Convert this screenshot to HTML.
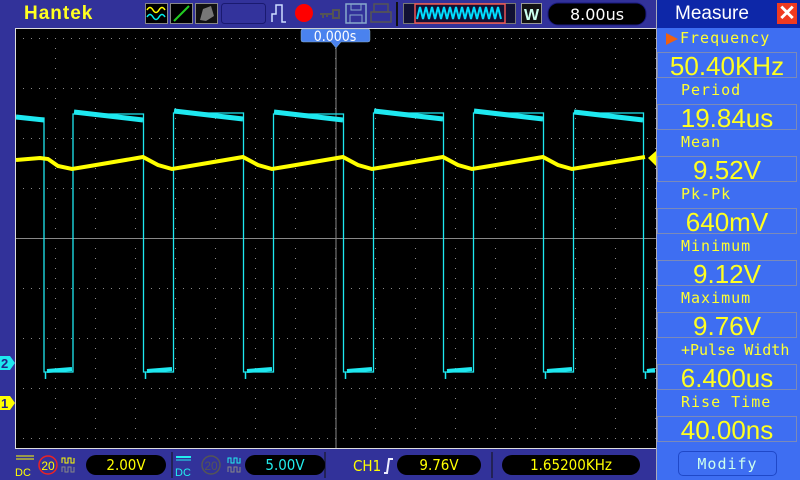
<!DOCTYPE html>
<html><head><style>
body{margin:0;width:800px;height:480px;overflow:hidden;background:#32329a;font-family:"Liberation Sans",sans-serif;position:relative}
.a{position:absolute}
.lbl{position:absolute;left:681px;color:#ffff30;font-size:15px;letter-spacing:1px;font-family:"DejaVu Sans Mono","Liberation Mono",monospace}
.val{position:absolute;left:657px;width:140px;height:26px;border:1px solid #7b8ab8;box-sizing:border-box;color:#ffff20;font-size:26px;line-height:26px;text-align:center;font-family:"Liberation Sans",sans-serif}
.pill{position:absolute;background:#000;border-radius:10px;height:20px;line-height:20px;text-align:center;font-size:15px;font-family:"DejaVu Sans Condensed","Liberation Sans",sans-serif}
</style></head><body>
<div class="a" style="left:24px;top:3px;color:#ffff20;font-weight:bold;font-size:19px;letter-spacing:1px">Hantek</div>
<svg class="a" style="left:0;top:0" width="656" height="29">
<rect x="145.5" y="3.5" width="22" height="20" fill="#000" stroke="#888"/>
<path d="M147 10 q3-5 6 0 t6 0 t6 0" stroke="#ff0" fill="none" stroke-width="1.5"/>
<path d="M147 17 q3-5 6 0 t6 0 t6 0" stroke="#0ee" fill="none" stroke-width="1.5"/>
<rect x="170.5" y="3.5" width="22" height="20" fill="#000" stroke="#888"/>
<path d="M174 21 L189 6" stroke="#2c2" stroke-width="2"/>
<rect x="195.5" y="3.5" width="22" height="20" fill="#111" stroke="#888"/>
<path d="M200 20 L203 9 L211 6 L214 16 L206 21Z" fill="#777"/>
<rect x="221.5" y="3.5" width="44" height="20" rx="3" fill="#33339c" stroke="#1a1a70"/>
<path d="M272 22 V14 H276 V5 H282 V22 H286" stroke="#cdf" fill="none" stroke-width="1.5"/>
<circle cx="304" cy="13" r="9" fill="#f00"/>
<path d="M320 14 H332 M333 10 h6 v8 h-6z M323 14 v4 M327 14 v3" stroke="#555" stroke-width="2" fill="none"/>
<rect x="346" y="4" width="20" height="19" fill="none" stroke="#8ac" stroke-width="1.5"/>
<rect x="351" y="4" width="10" height="6" fill="none" stroke="#8ac"/>
<rect x="350" y="15" width="12" height="8" fill="none" stroke="#8ac"/>
<rect x="374" y="4" width="14" height="8" fill="none" stroke="#555" stroke-width="1.5"/>
<rect x="371" y="12" width="20" height="10" fill="none" stroke="#555" stroke-width="1.5"/>
<rect x="396" y="2" width="2" height="24" fill="#111"/>
<rect x="403.5" y="3.5" width="112" height="20" fill="#113" stroke="#777"/>
<rect x="415" y="4" width="90" height="19" fill="none" stroke="#e55" stroke-width="1.5"/>
<path d="M417 19 l3-12 l3 12 l3-12 l3 12 l3-12 l3 12 l3-12 l3 12 l3-12 l3 12 l3-12 l3 12 l3-12 l3 12 l3-12 l3 12 l3-12 l3 12 l3-12 l3 12 l3-12 l3 12 l3-12 l3 12 l3-12 l3 12 l3-12 l3 12" stroke="#0df" fill="none" stroke-width="2"/>
<rect x="521.5" y="3.5" width="20" height="20" fill="#111" stroke="#999"/>
<text x="531.5" y="20" font-size="16" font-weight="bold" fill="#cfe" text-anchor="middle" font-family="Liberation Sans">W</text>
<rect x="548" y="3" width="98" height="22" rx="10" fill="#000" stroke="#1a1a80"/>
<text x="597" y="20" font-size="16" fill="#fff" text-anchor="middle" font-family="DejaVu Sans">8.00us</text>
</svg>
<svg class="a" style="left:0;top:0" width="656" height="480">
<defs>
<pattern id="pc" x="16" y="38" width="40" height="10" patternUnits="userSpaceOnUse"><rect x="39" y="0" width="1" height="1" fill="#888"/></pattern>
<pattern id="pr" x="15" y="38" width="8" height="50" patternUnits="userSpaceOnUse"><rect x="0" y="0" width="1" height="1" fill="#888"/></pattern>
</defs>
<rect x="15" y="28" width="641" height="421" fill="#000"/>
<path d="M15.5 448 V28.5 H656" stroke="#ddd" fill="none"/>
<path d="M15 448.5 H656" stroke="#ddd"/>
<rect x="16" y="30" width="640" height="416" fill="url(#pc)"/>
<rect x="16" y="30" width="640" height="416" fill="url(#pr)"/>
<path d="M336 29 V448 M16 238.5 H656" stroke="#888"/>
<path d="M303 29 H368 Q370 29 370 31 V40 Q370 42 368 42 H341 L336 48 L331 42 H303 Q301 42 301 40 V31 Q301 29 303 29Z" fill="#4a82ee" stroke="#8ab" stroke-width="0.5"/>
<text x="335" y="41" font-size="14" fill="#fff" text-anchor="middle" font-family="DejaVu Sans Condensed,DejaVu Sans">0.000s</text>
<g stroke="#1ee8f0" fill="none">
<path d="M16 118 H44 V372 H73 V114 H143.5 V372 H173.5 V113 H243.5 V372 H273.5 V114 H343.5 V372 H373.5 V113 H443.5 V372 H473.5 V113 H543.5 V372 H573.5 V113 H643.5 V372 H655" stroke-width="1.3"/>
<g stroke-width="5">
<path d="M16 117 L44 120"/><path d="M74 112 L143 120"/><path d="M174 111 L243 119"/><path d="M274 112 L343 120"/><path d="M374 111 L443 119"/><path d="M474 111 L543 119"/><path d="M574 112 L643 120"/>
</g>
<g stroke-width="4">
<path d="M47 371 L72 369"/><path d="M147 371 L172 369"/><path d="M247 371 L272 369"/><path d="M347 371 L372 369"/><path d="M447 371 L472 369"/><path d="M547 371 L572 369"/><path d="M647 371 L655 370"/>
</g>
<path d="M45.5 372 V379 M145.5 372 V379 M245.5 372 V379 M345.5 372 V379 M445.5 372 V379 M545.5 372 V379 M645.5 372 V379" stroke-width="1.5"/>
</g>
<path d="M16 160 L40 158 L48 159 L58 166 L72 169 L90 166 L143 157 L158 165 L172 169 L190 166 L243 157 L258 165 L272 169 L290 166 L343 157 L358 165 L372 169 L390 166 L443 157 L458 165 L472 169 L490 166 L543 157 L558 165 L572 169 L590 166 L645 157" stroke="#ffff00" stroke-width="4" fill="none"/>
<path d="M656 151 L648 158 L656 166Z" fill="#ff0"/>
</svg>
<svg class="a" style="left:0;top:350px" width="16" height="60">
<path d="M0 6 H10 L15 13 L10 20 H0Z" fill="#1ee8f0"/>
<text x="1" y="18" font-size="13" font-weight="bold" fill="#22228a" font-family="Liberation Sans">2</text>
<path d="M0 46 H10 L15 53 L10 60 H0Z" fill="#ffff00"/>
<text x="1" y="58" font-size="13" font-weight="bold" fill="#22228a" font-family="Liberation Sans">1</text>
</svg>
<svg class="a" style="left:0;top:450px" width="656" height="30">
<path d="M16 6 H34 M16 9 H34" stroke="#ff0"/>
<text x="15" y="26" font-size="11" fill="#ff0" font-family="Liberation Sans">DC</text>
<circle cx="48" cy="15" r="9" fill="none" stroke="#e22" stroke-width="1.5"/>
<text x="48" y="20" font-size="12" fill="#ff0" text-anchor="middle" font-family="Liberation Sans">20</text>
<path d="M62 13 V8 h3 v5 h3 v-5 h3 v5 h3 v-5" stroke="#ff0" fill="none"/>
<path d="M62 22 V17 h3 v5 h3 v-5 h3 v5 h3 v-5" stroke="#888" fill="none"/>
<rect x="176" y="6" width="15" height="2" fill="#2ee"/>
<path d="M176 10 H191" stroke="#2ee"/>
<text x="175" y="26" font-size="11" fill="#2ee" font-family="Liberation Sans">DC</text>
<circle cx="211" cy="15" r="9" fill="none" stroke="#555" stroke-width="1.5"/>
<text x="211" y="20" font-size="12" fill="#555" text-anchor="middle" font-family="Liberation Sans">20</text>
<path d="M228 13 V8 h3 v5 h3 v-5 h3 v5 h3 v-5" stroke="#2ee" fill="none"/>
<path d="M228 22 V17 h3 v5 h3 v-5 h3 v5 h3 v-5" stroke="#888" fill="none"/>
<path d="M172 2 V28 M325 2 V28 M492 2 V28" stroke="#111" stroke-width="1"/>
<text x="353" y="21" font-size="15" fill="#ff0" font-family="DejaVu Sans Condensed">CH1</text>
<path d="M384 23 h3 l2 -14 h4" stroke="#eef" fill="none" stroke-width="2"/>
</svg>
<div class="pill" style="left:86px;top:455px;width:80px;color:#ff0">2.00V</div>
<div class="pill" style="left:245px;top:455px;width:80px;color:#2ee">5.00V</div>
<div class="pill" style="left:397px;top:455px;width:84px;color:#ff0">9.76V</div>
<div class="pill" style="left:502px;top:455px;width:138px;color:#ff0">1.65200KHz</div>
<div class="a" style="left:656px;top:0;width:144px;height:480px;background:#3e6ef2;border-left:1px solid #aab"></div>
<div class="a" style="left:657px;top:0;width:143px;height:28px;background:#0d27a8"></div>
<div class="a" style="left:675px;top:3px;color:#fff;font-size:19px">Measure</div>
<div class="a" style="left:777px;top:3px;width:20px;height:21px;background:#f03a20;color:#fff;font-size:21px;line-height:21px;text-align:center;font-weight:bold">✕</div>
<svg class="a" style="left:665px;top:32px" width="14" height="14"><path d="M1 1 L13 7 L1 13Z" fill="#f06010"/></svg>
<div class="lbl" style="left:680px;top:29px">Frequency</div>
<div class="val" style="top:52px">50.40KHz</div>
<div class="lbl" style="top:81px">Period</div>
<div class="val" style="top:104px">19.84us</div>
<div class="lbl" style="top:133px">Mean</div>
<div class="val" style="top:156px">9.52V</div>
<div class="lbl" style="top:185px">Pk-Pk</div>
<div class="val" style="top:208px">640mV</div>
<div class="lbl" style="top:237px">Minimum</div>
<div class="val" style="top:260px">9.12V</div>
<div class="lbl" style="top:289px">Maximum</div>
<div class="val" style="top:312px">9.76V</div>
<div class="lbl" style="top:341px;letter-spacing:0">+Pulse Width</div>
<div class="val" style="top:364px">6.400us</div>
<div class="lbl" style="top:393px">Rise Time</div>
<div class="val" style="top:416px">40.00ns</div>
<div class="a" style="left:678px;top:451px;width:99px;height:25px;border:1px solid #1f48c8;border-radius:5px;box-sizing:border-box;color:#cfe;font-size:15px;line-height:24px;text-align:center;letter-spacing:1px;font-family:'DejaVu Sans Mono',monospace">Modify</div>
</body></html>
